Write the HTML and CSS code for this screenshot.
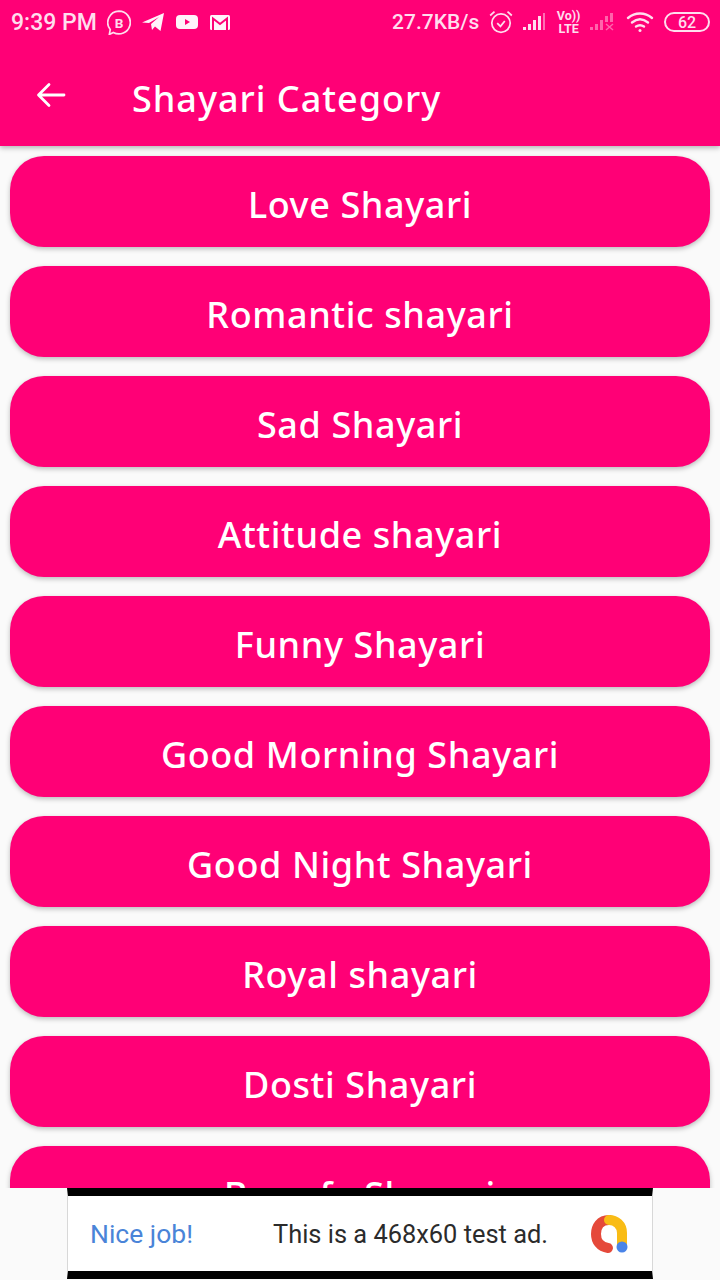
FILE: index.html
```html
<!DOCTYPE html>
<html lang="en">
<head>
  <meta charset="UTF-8" />
  <meta name="viewport" content="width=device-width, initial-scale=1.0" />
  <title>Shayari Category</title>
  <link rel="stylesheet" href="styles.css">
</head>
<body>
  <header class="app-bar">
    <div class="status-bar">
      <div class="status-left">
        <span class="clock">9:39 PM</span>
        <svg class="ic" width="24" height="25" viewBox="1.500 1 21 22"><path d="M12 2a10 10 0 1 1-5 18.700l-3.500 1.800.8-4.300A10 10 0 0 1 12 2z" fill="none" stroke="#fde" stroke-width="1.500"/><text x="12" y="16.500" class="biz">B</text></svg>
        <svg class="ic" width="24" height="22" viewBox="0 0 24 22"><path d="M1 11.500 23 2l-3.500 18-5.500-4.500-3 3.500-1-6 8-7-10 6z" fill="#fff3fa"/></svg>
        <svg class="ic" width="24" height="18" viewBox="0 0 24 18"><rect x="1" y="2" width="22" height="14" rx="4" fill="#fff3fa"/><path d="M10 6v6l5-3z" fill="#ff0076"/></svg>
        <svg class="ic" width="22" height="18" viewBox="0 0 22 18"><rect x="1" y="2" width="20" height="15" rx="1.500" fill="#fff3fa"/><path d="M4 17V5.500l7 5.500 7-5.500V17" fill="none" stroke="#ff0076" stroke-width="2"/></svg>
      </div>
      <div class="status-right">
        <span class="speed">27.7KB/s</span>
        <svg width="26" height="26" viewBox="0 0 24 24" fill="none" stroke="#fde" stroke-width="1.600"><circle cx="12" cy="13" r="8.500"/><path d="M8.500 13l3 3 4-5M2 6l4-3.500M22 6l-4-3.500"/></svg>
        <svg class="signal" width="26" height="20" viewBox="0 0 26 20"><path d="M1 15h3v3H1zM6 12h3v6H6zM11 8h3v10h-3zM16 4h3v14h-3z" fill="#fde"/><path d="M21 1h2v17h-2z" fill="#fde" opacity=".5"/></svg>
        <span class="volte"><span>Vo))</span><span>LTE</span></span>
        <svg class="signal" width="28" height="20" viewBox="0 0 28 20"><path d="M1 15h3v3H1zM6 12h3v6H6zM11 8h3v10h-3zM16 4h3v6h-3zM21 1h3v9h-3z" fill="#fde" opacity=".45"/><path d="M17 12l7 6m0-6-7 6" stroke="#fde" stroke-width="1.500" opacity=".45"/></svg>
        <svg width="30" height="24" viewBox="0 0 30 24" fill="none" stroke="#fde" stroke-width="2.400" stroke-linecap="round"><path d="M2 8c7-6 17-6 24 0M6 12.500c5-4 11-4 16 0M10 16.500c3-2 5-2 8 0"/><circle cx="14" cy="20.500" r="1.500" fill="#fde" stroke="none"/></svg>
        <span class="battery"><span class="battery-level">62</span></span>
      </div>
    </div>
    <div class="toolbar">
      <svg class="back" width="32" height="32" viewBox="0 0 32 32" fill="none" stroke="#fff" stroke-width="2.800" stroke-linecap="round" stroke-linejoin="round"><path d="M29 16H4M14 5.500 3.500 16 14 26.500"/></svg>
      <h1 class="title">Shayari Category</h1>
    </div>
  </header>

  <main class="category-list">
    <a class="category">Love Shayari</a>
    <a class="category">Romantic shayari</a>
    <a class="category">Sad Shayari</a>
    <a class="category">Attitude shayari</a>
    <a class="category">Funny Shayari</a>
    <a class="category">Good Morning Shayari</a>
    <a class="category">Good Night Shayari</a>
    <a class="category">Royal shayari</a>
    <a class="category">Dosti Shayari</a>
    <a class="category">Bewafa Shayari</a>
  </main>

  <footer class="ad-slot">
    <div class="ad">
      <span class="ad-nice">Nice job!</span>
      <span class="ad-text">This is a 468x60 test ad.</span>
      <svg class="ad-logo" width="40" height="40" viewBox="0 0 40 40" fill="none" stroke-width="10" stroke-linecap="round"><path d="M20 6C11 6 7 13 7 20s4 13 12 14" stroke="#e5493a"/><path d="M20 6c7 0 13 5 13 13v13" stroke="#f9bc15"/><circle cx="33" cy="33" r="5.500" fill="#4a84e8"/></svg>
    </div>
  </footer>
</body>
</html>
```

FILE: styles.css
```css
html, body {
  margin: 0;
  padding: 0;
}
body {
  width: 720px;
  height: 1280px;
  overflow: hidden;
  display: flex;
  flex-direction: column;
  background-color: #fafafa;
  font-family: 'Noto Sans', 'Open Sans', sans-serif;
}
.app-bar {
  flex: none;
  height: 146px;
  background-color: #ff0076;
  color: #fff;
  box-shadow: 0 2px 5px rgba(0,0,0,0.28);
  position: relative;
  z-index: 2;
}
.status-bar {
  height: 44px;
  display: flex;
  justify-content: space-between;
  align-items: center;
  padding: 0 10px 0 11px;
  color: #fde;
}
.status-left, .status-right {
  display: flex;
  align-items: center;
}
.status-left {
  gap: 10px;
}
.status-right {
  gap: 8.500px;
}
.clock, .speed {
  font-family: Roboto, sans-serif;
  font-size: 21px;
  font-weight: 500;
}
.clock {
  font-size: 23px;
}
.biz {
  font-family: Roboto, sans-serif;
  font-size: 12px;
  font-weight: 700;
  fill: #fde;
  text-anchor: middle;
}
.volte {
  display: flex;
  flex-direction: column;
  align-items: center;
  font-family: Roboto, sans-serif;
  font-size: 12.500px;
  font-weight: 700;
  line-height: 13px;
}
.battery {
  width: 46px;
  height: 20px;
  box-sizing: border-box;
  border: 2px solid #fde;
  border-radius: 10px;
  display: flex;
  justify-content: center;
  align-items: center;
}
.battery-level {
  font-family: Roboto, sans-serif;
  font-size: 16px;
  font-weight: 500;
}
.toolbar {
  height: 102px;
  display: flex;
  align-items: center;
  padding-left: 35px;
  gap: 65px;
}
.back {
  flex: none;
}
.title {
  margin: 0;
  padding-top: 6px;
  font-size: 36px;
  font-weight: 500;
  letter-spacing: 1px;
}
.category-list {
  flex: none;
  height: 1042px;
  box-sizing: border-box;
  overflow: hidden;
  padding: 10px 10px 0;
  display: flex;
  flex-direction: column;
  gap: 19px;
}
.category {
  flex: none;
  height: 91px;
  display: flex;
  justify-content: center;
  align-items: center;
  border-radius: 34px;
  background-color: #ff0076;
  color: #fff;
  font-size: 36px;
  font-weight: 500;
  letter-spacing: 0.6px;
  padding-top: 6px;
  box-sizing: border-box;
  box-shadow: 0 2px 5px rgba(0,0,0,0.25);
}
.ad-slot {
  flex: none;
  height: 92px;
  display: flex;
  justify-content: center;
}
.ad {
  width: 586px;
  height: 91px;
  box-sizing: border-box;
  border-top: 8px solid #000;
  border-bottom: 8px solid #000;
  border-left: 1px solid #d8d8d8;
  border-right: 1px solid #d8d8d8;
  background-color: #fff;
  display: flex;
  align-items: center;
  padding: 0 20px 0 22px;
}
.ad-nice {
  color: #4a84d8;
  font-family: Roboto, sans-serif;
  font-size: 26.500px;
}
.ad-text {
  color: #2b2b2b;
  font-family: Roboto, sans-serif;
  font-size: 25.400px;
  margin-left: 80px;
}
.ad-logo {
  margin-left: auto;
  margin-right: 3px;
}
```
